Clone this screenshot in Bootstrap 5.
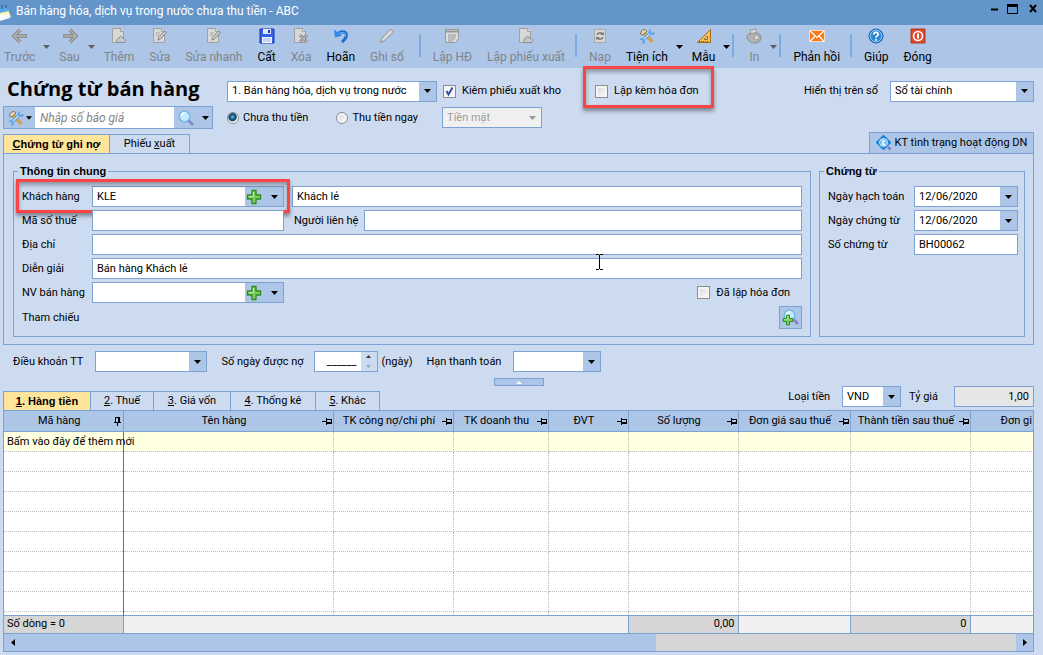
<!DOCTYPE html>
<html lang="vi">
<head>
<meta charset="utf-8">
<meta name="viewport" content="width=device-width, initial-scale=1">
<title>Bán hàng hóa, dịch vụ trong nước chưa thu tiền - ABC</title>
<link href="https://cdn.jsdelivr.net/npm/bootstrap@5.3.0/dist/css/bootstrap.min.css" rel="stylesheet">
<style>
:root{--line:#7ba2d2;--bar:#adc6e7;--page:#cddbf0;--arrow:url("data:image/svg+xml,%3Csvg xmlns='http://www.w3.org/2000/svg' width='7' height='4'%3E%3Cpath d='M0 0h7L3.5 4z'/%3E%3C/svg%3E")}
body{background:var(--page);color:#000;font:11px/16px Roboto,"Liberation Sans",sans-serif}
label{white-space:nowrap}
.titlebar{background:#6495ca;color:#fff;height:25px;font-size:12px}
.titlebar button{border:0;background:none;padding:0;display:flex}
.toolbar{background:var(--bar);height:43px;font-size:12px;padding-left:4px}
.tool{border:0;background:none;color:#000;padding:3px 0 0;margin-right:15px;display:flex;flex-direction:column;align-items:center;height:43px;gap:4px;white-space:nowrap;line-height:18px}
.tool:disabled{color:#808489}
.tool svg,.ico{width:16px;height:16px;flex:none}
.drop{border:0;background:none;padding:0;width:7px;margin:0 9px 0 -7px;display:flex;align-items:center;color:#000;height:43px}
.drop:disabled{color:#5c6066}
.divider{width:2px;height:23px;background:#7fabe0;margin:9px 12px 0 -5px}
.drop + .divider{margin-left:-2px}
.screen{padding:0 9px 0 3px}
h1{font:bold 20px/26px "Open Sans",sans-serif;margin:0}
.field,.pick{height:21px;border:1px solid var(--line);background-color:#fff;color:#000;padding:0 4px;border-radius:0;min-width:0;font:inherit}
.field:focus,.pick:focus{outline:1px solid #4c80c0}
.pick{appearance:none;background-image:var(--arrow),linear-gradient(var(--bar),var(--bar));background-repeat:no-repeat;background-position:right 5px center,right top;background-size:7px 4px,17px 100%;padding-right:19px;text-overflow:ellipsis}
.pick:disabled{background-color:#f0f0f0;color:#9d9d9d;opacity:1;background-image:url("data:image/svg+xml,%3Csvg xmlns='http://www.w3.org/2000/svg' width='7' height='4'%3E%3Cpath fill='%23999' d='M0 0h7L3.5 4z'/%3E%3C/svg%3E"),none}
.combo{display:flex;height:21px;border:1px solid var(--line);background:var(--bar);min-width:0}
.combo input{border:0;flex:1;width:0;min-width:0;padding:0 4px;background:#fff;font:inherit}
.combo button{border:0;background:var(--bar);padding:0;width:17px;display:flex;align-items:center;justify-content:center}
.combo .wide{width:21px;padding-right:3px}
.tick,.dot{appearance:none;width:13px;height:13px;flex:none;margin:0;border:1px solid #8b8d91;background:linear-gradient(135deg,#cfd2d8,#fff);box-shadow:inset 0 0 0 2px #f4f4f4}
.tick:checked{background:#f4f6fa url("data:image/svg+xml,%3Csvg xmlns='http://www.w3.org/2000/svg' viewBox='0 0 11 11'%3E%3Cpath d='M2.5 5l2 3.5L8.500 1.500' fill='none' stroke='%233b4ea0' stroke-width='2'/%3E%3C/svg%3E") center/11px;box-shadow:none}
.dot{border-radius:50%;width:12px;height:12px}
.dot:checked{background:radial-gradient(circle at 45% 40%,#5cc6ee 0,#14496d 35%,#14496d 45%,#f4f4f4 60%);box-shadow:none}
.opt{display:flex;align-items:center;gap:6px}
.opt-radio{gap:4px}
.opt-stock{margin-left:6px}
.head-grid{display:grid;grid-template-columns:224px 1fr;align-items:center}
.invoice{position:relative;margin-left:24px;padding-left:10px}
.mark-box{position:absolute;border:3px solid #f94545;box-shadow:0 3px 4px #0006,inset 0 3px 4px #0005;pointer-events:none}
.mark-customer{inset:-7px auto -6px -6px;width:274px}
.mark-invoice{inset:-17px -15px -9px -2px}
.search{width:210px;height:23px;background:var(--bar);border:1px solid var(--line)}
.search input{border:0;width:139px;padding:0 5px;height:21px;font:inherit;font-size:12px}
.search input::placeholder{color:#858585;font-style:italic;opacity:1}
.search button{border:0;background:none;padding:0;display:flex;align-items:center}
.search .mode{padding:0 3px 0 4px;gap:2px}
.tab-line{margin-top:3px}
.tabs{display:flex;padding:0;margin:0;list-style:none}
.tabs button{border:1px solid var(--line);border-left-width:0;border-bottom:0;background:var(--page);height:19px;padding:0;line-height:18px;text-align:center;color:#000}
.tabs li:first-child button{border-left-width:1px}
.tabs .active{background:#ffe49b;font:bold 11px/18px "Liberation Sans",sans-serif}
.main-tabs button{width:80px}.main-tabs .active{width:107px}
.detail-tabs button{width:63px}.detail-tabs .active{width:88px}.detail-tabs .t3{width:77px}.detail-tabs .t4{width:85px}.detail-tabs .t5{width:64px}
.status-btn{border:1px solid var(--line);border-bottom:0;background:var(--bar);height:21px;width:165px;padding:0;gap:3px;white-space:nowrap}
.panel{border:1px solid var(--line);padding:9px 8px 7px 9px;display:grid;grid-template-columns:1fr 206px;gap:8px}
fieldset{border:1px solid var(--line);padding:7px 8px 7px 8px}
legend{float:none;width:auto;margin:0 0 0 -4px;padding:0 2px;font:bold 11px/16px "Liberation Sans",sans-serif}
.stack-rows{display:grid;gap:3px}
.line-row{display:grid;grid-template-columns:70px minmax(0,1fr);align-items:center;min-height:21px;position:relative}
.right-box .line-row{grid-template-columns:86px minmax(0,1fr)}
.right-box{padding-right:6px}
.w-code{width:192px}
.contact-label{margin:0 6px 0 10px}
.ibeam{position:absolute;left:71%;top:-5px;margin-left:19px}
.plus-btn{width:23px;height:23px;border:1px solid var(--line);background:var(--bar);padding:0;display:grid;place-items:center}
.terms{margin-top:6px;padding-left:10px}
.terms label{margin-right:12px}
.terms .next{margin-left:14px}
.terms .days-label{margin-right:10px}
.spin button{height:50%;background:var(--page);border:0;width:16px}
.spin .steps{width:16px}
.splitter{width:50px;height:8px;border:1px solid var(--line);background:var(--bar);padding:0;display:flex;justify-content:center;align-items:center;margin:6px auto 0}
.currency{gap:8px;margin-bottom:3px}
.w-doc{width:210px}.w-cash{width:100px}.w-book{width:144px}.w-term{width:112px}.w-due{width:88px}.w-cur{width:59px}.w-rate{width:80px}.w-days{width:64px}
.field.w-rate{background:#e6e6e6}
.gridbox{border:1px solid var(--line);overflow:hidden;background:#fff}
.gridbox table{table-layout:fixed;width:1082px;min-width:105%;border-collapse:collapse;margin:0}
.gridbox col{width:120px}
.gridbox .c1{width:119px}.gridbox .c2{width:210px}.gridbox .c4{width:95px}.gridbox .c5{width:80px}.gridbox .c6{width:110px}.gridbox .c7{width:112px}.gridbox .c9{width:auto}
.gridbox th,.gridbox td{height:20px;padding:0 3px;line-height:19px;white-space:nowrap;border:1px dotted #bdbdbd;border-width:0 1px 1px 0}
.gridbox th{background:var(--bar);font-weight:400;border:1px solid var(--line);border-width:0 1px 1px 0;padding-right:1px}
.gridbox .last-head{text-align:left;padding-left:30px}
.gridbox tbody td:first-child{border-right:1px solid #707070}
.gridbox .entry td{background:#ffffe1}
.gridbox .short td{height:4px;line-height:3px;border-bottom:0}
.gridbox tfoot td{background:#f0f0f0;border:1px solid var(--line);border-width:1px 1px 1px 0;height:18px;line-height:16px}
.gridbox tfoot .sum{background:#d6d6d6}
.cap{display:flex;align-items:center}.cap span{flex:1;text-align:center}.cap svg{width:10px;height:10px;flex:none}
.hscroll{height:17px;background:var(--bar)}
.hscroll button{border:0;background:none;width:17px;padding:0;display:flex;align-items:center;justify-content:center}
.hscroll .rail{background:#d6d6d6;width:35%}
</style>
</head>
<body>
<svg width="0" height="0" class="position-absolute" aria-hidden="true">
<defs>
<symbol id="caret" viewBox="0 0 7 4"><path d="M0 0h7L3.500 4z" fill="currentColor"/></symbol>
<symbol id="left" viewBox="0 0 16 16"><path d="M8 2L2 8l6 6M2.500 8H15" fill="none" stroke="#858585" stroke-width="3.600"/><path d="M8 2L2 8l6 6M2.500 8H14.500" fill="none" stroke="#b2b2b2" stroke-width="1.600"/></symbol>
<symbol id="right" viewBox="0 0 16 16"><path d="M8 2l6 6-6 6M13.500 8H1" fill="none" stroke="#858585" stroke-width="3.600"/><path d="M8 2l6 6-6 6M13.500 8H1.500" fill="none" stroke="#b2b2b2" stroke-width="1.600"/></symbol>
<symbol id="page" viewBox="0 0 16 16"><path d="M1.500.500h8l3 3v11h-11z" fill="#d8d8d8" stroke="#a0a0a0"/><path d="M9.500.500v3h3" fill="#eee" stroke="#a0a0a0"/></symbol>
<symbol id="new" viewBox="0 0 16 16"><use href="#page"/><path d="M6 14.500c-1.500-3 1-5 2-3.500 0-3.500 3-3.500 3.500-.500 3-.500 4 2 2.500 4z" fill="#c8c8c8" stroke="#8f8f8f"/></symbol>
<symbol id="edit" viewBox="0 0 16 16"><use href="#page"/><path d="M4 5h4M4 7h3" stroke="#aaa"/><path d="M6 12l.5-2.500 6-6.500 2 1.500-6.500 7z" fill="#ccc" stroke="#858585"/></symbol>
<symbol id="save" viewBox="0 0 16 16"><path d="M1 1h14v14H1z" fill="#3463e8" stroke="#1733b8"/><path d="M4 1h8v5H4z" fill="#dce8ff"/><path d="M9 2h2v3H9z" fill="#1a35b8"/><path d="M3 9h10v6H3z" fill="#f4f7ff"/><path d="M4 11h8M4 13h8" stroke="#9bb2ec"/></symbol>
<symbol id="del" viewBox="0 0 16 16"><use href="#page"/><path d="M7 7l7 7M14 7l-7 7" stroke="#8a8a8a" stroke-width="3"/><path d="M7 7l7 7M14 7l-7 7" stroke="#ccc"/></symbol>
<symbol id="undo" viewBox="0 0 16 16"><path d="M4.500 6C9 2 15 4 13 9c-.7 2-2.200 3.500-4 5" fill="none" stroke="#1e6fd0" stroke-width="3.200"/><path d="M1 1.500l1 8 7-2z" fill="#2b87e6"/><path d="M4.500 6C9 3 14 4.500 12.500 8.500" fill="none" stroke="#69b6f7"/></symbol>
<symbol id="pencil" viewBox="0 0 16 16"><path d="M1.500 14.500l1-4 9-9.500 3 3-9.500 9z" fill="#cfcfcf" stroke="#959595"/><path d="M4 11.500l8.500-8.500" stroke="#eee"/></symbol>
<symbol id="bill" viewBox="0 0 16 16"><path d="M1.500 1.500h13v9l-3 4h-10z" fill="#dedede" stroke="#9a9a9a"/><path d="M2 3.500h12" stroke="#999" stroke-width="2"/><path d="M4 7h8M4 9h8M4 11h7M4 13h5" stroke="#999"/></symbol>
<symbol id="reload" viewBox="0 0 16 16"><path d="M2.500 1.500h11v13h-11z" fill="#d8d8d8" stroke="#a8a8a8"/><path d="M5 7c1-3 5-3 5.500-.500M11 9c-1 3-5 3-5.500.500" fill="none" stroke="#777" stroke-width="1.500"/><path d="M8 7h4V4zM8 9H4v3z" fill="#777"/></symbol>
<symbol id="tools" viewBox="0 0 16 16"><path d="M5 5l8.500 9" stroke="#c98a2c" stroke-width="3"/><path d="M5 5l8.500 9" stroke="#ffcf70"/><path d="M1.500 6c0-3 2-4.500 5-4.500L8 3 4 7z" fill="#ddd6c8" stroke="#86724f"/><path d="M3.500 12.500L12 4.500" stroke="#3d93dc" stroke-width="2.800"/><path d="M3.500 12.500L12 4.500" stroke="#d0ebff" stroke-width="1.200"/><path d="M11 1.500l-.500 3.500 3 1 2-1.500M1 11l3 .500 1 2.500-1.500 1.500" fill="none" stroke="#55a5e6" stroke-width="1.700"/></symbol>
<symbol id="ruler" viewBox="0 0 16 16"><path d="M1.500 14.500L14.500 1.500v13z" fill="#f9c25c" stroke="#a8691a"/><path d="M8 11.500l3.500-3.500v3.500z" fill="#c6d9f2" stroke="#a8691a"/><path d="M3.500 13v1M5.500 13v1M7.500 13v1M9.500 13v1M11.500 13v1" stroke="#734a0d"/></symbol>
<symbol id="print" viewBox="0 0 16 16"><path d="M4 2l6-1 1 5-6 1z" fill="#d4d4d4" stroke="#999"/><path d="M1 9c0-4 5-3 8-4 4 0 6 2 6 5s-3 5-6 5-8-2-8-6z" fill="#b4b4b4" stroke="#8b8b8b"/><circle cx="10.500" cy="9.500" r="2.500" fill="#d8d8d8" stroke="#999"/></symbol>
<symbol id="mail" viewBox="0 0 16 16"><path d="M.5 2.500h15v11H.5z" fill="#f47a1c" stroke="#fbd9b8"/><path d="M1 3l7 6.500L15 3M1 13.500L6 8M15 13.500L10 8" fill="none" stroke="#fff" stroke-width="1.200"/></symbol>
<symbol id="help" viewBox="0 0 16 16"><circle cx="8" cy="8" r="7" fill="#2e87d6" stroke="#1a5faa"/><circle cx="8" cy="8" r="5.800" fill="none" stroke="#8fc9f5"/><path d="M5.800 6.500c0-3 4.600-2.800 4.400-.200C10.200 8 8 7.800 8 9.800M8 11v1.800" fill="none" stroke="#fff" stroke-width="1.700"/></symbol>
<symbol id="power" viewBox="0 0 16 16"><path d="M1 1h14v14H1z" fill="#dd4a30" stroke="#b93420"/><circle cx="8" cy="8" r="4.500" fill="none" stroke="#fff" stroke-width="1.600"/><path d="M8 5.500v5" stroke="#fff" stroke-width="2"/></symbol>
<symbol id="glass" viewBox="0 0 16 16"><path d="M11 11l3 3" stroke="#8d83d0" stroke-width="3" stroke-linecap="round"/><circle cx="6.500" cy="6.500" r="5.300" fill="#c3e8ff" stroke="#6cb4ea" stroke-width="1.300"/><path d="M3.500 6c0-2 1.500-3 3-3" fill="none" stroke="#fff" stroke-width="1.500"/></symbol>
<symbol id="plus" viewBox="0 0 16 16"><path d="M6 1.500h4V6h4.500v4H10v4.500H6V10H1.500V6H6z" fill="#7bcf5a" stroke="#2c8b1f" stroke-width="1.300"/><path d="M7.500 3v4.500H3" fill="none" stroke="#c0efaa"/></symbol>
<symbol id="gem" viewBox="0 0 16 16"><path d="M7.500 1L14 7.500 7.500 14 1 7.500z" fill="#2f9ce8" stroke="#1b84d2" stroke-width="2" stroke-linejoin="round"/><circle cx="7.500" cy="7.500" r="4" fill="#6fc0fa" stroke="#c9eaff"/><path d="M9 6H7v3.500h2" fill="none" stroke="#fff" stroke-width="1.500"/><path d="M12 12l2.500 2.500" stroke="#8177cc" stroke-width="2.500"/></symbol>
<symbol id="pin" viewBox="0 0 10 10"><path d="M0 5h4v1H0zM4 2h1v7H4zM5 3h5v1H5zM9 4h1v3H9zM5 6h5v2H5z" fill="#000"/></symbol>
<symbol id="pindown" viewBox="0 0 10 10"><path d="M5 7h1v3H5zM2 6h7v1H2zM3 1h1v5H3zM4 1h3v1H4zM6 1h2v5H6z" fill="#000"/></symbol>
</defs>
</svg>

<header>
  <div class="titlebar d-flex align-items-center">
    <svg width="12" height="18" viewBox="0 0 12 18" class="me-1"><path d="M0 7l7-4 4 10-11 3z" fill="#fff6ae"/><path d="M0 4l8-1 1 4-9 2z" fill="#55a6ea"/><path d="M0 11l8-1 2 4-10 3z" fill="#f7fbff"/><path d="M2 1v4M6 1v3" stroke="#26578f"/></svg>
    <span class="flex-grow-1 text-truncate pb-1">Bán hàng hóa, dịch vụ trong nước chưa thu tiền - ABC</span>
    <div class="d-flex align-items-center pb-2 pe-1">
      <button type="button" class="me-2" aria-label="Thu nhỏ"><svg width="9" height="10"><path d="M1 5.500h7" stroke="#000" stroke-width="2"/></svg></button>
      <button type="button" class="me-2" aria-label="Phóng to"><svg width="13" height="10"><path d="M.5 1v8.500h10V1" fill="none" stroke="#000"/><path d="M0 1.500h11" stroke="#000" stroke-width="3"/></svg></button>
      <button type="button" aria-label="Đóng cửa sổ"><svg width="11" height="9"><path d="M2 1l6 7M8 1L2 8" stroke="#000" stroke-width="2"/></svg></button>
    </div>
  </div>
  <nav class="toolbar d-flex" aria-label="Thanh công cụ">
    <button class="tool" disabled><svg><use href="#left"/></svg>Trước</button>
    <button class="drop" disabled aria-label="Chọn trước"><svg width="7" height="4"><use href="#caret"/></svg></button>
    <button class="tool" disabled><svg><use href="#right"/></svg>Sau</button>
    <button class="drop" disabled aria-label="Chọn sau"><svg width="7" height="4"><use href="#caret"/></svg></button>
    <button class="tool" disabled><svg><use href="#new"/></svg>Thêm</button>
    <button class="tool" disabled><svg><use href="#edit"/></svg>Sửa</button>
    <button class="tool" disabled><svg><use href="#edit"/></svg>Sửa nhanh</button>
    <button class="tool"><svg><use href="#save"/></svg>Cất</button>
    <button class="tool" disabled><svg><use href="#del"/></svg>Xóa</button>
    <button class="tool"><svg><use href="#undo"/></svg>Hoãn</button>
    <button class="tool" disabled><svg><use href="#pencil"/></svg>Ghi sổ</button>
    <span class="divider ms-0"></span>
    <button class="tool" disabled><svg><use href="#bill"/></svg>Lập HĐ</button>
    <button class="tool" disabled><svg><use href="#new"/></svg>Lập phiếu xuất</button>
    <span class="divider"></span>
    <button class="tool" disabled><svg><use href="#reload"/></svg>Nạp</button>
    <button class="tool"><svg><use href="#tools"/></svg>Tiện ích</button>
    <button class="drop" aria-label="Chọn tiện ích"><svg width="7" height="4"><use href="#caret"/></svg></button>
    <button class="tool"><svg><use href="#ruler"/></svg>Mẫu</button>
    <button class="drop me-1" aria-label="Chọn mẫu"><svg width="7" height="4"><use href="#caret"/></svg></button>
    <span class="divider"></span>
    <button class="tool" disabled><svg><use href="#print"/></svg>In</button>
    <button class="drop me-1" disabled aria-label="Chọn máy in"><svg width="7" height="4"><use href="#caret"/></svg></button>
    <span class="divider"></span>
    <button class="tool"><svg><use href="#mail"/></svg>Phản hồi</button>
    <span class="divider"></span>
    <button class="tool"><svg><use href="#help"/></svg>Giúp</button>
    <button class="tool"><svg><use href="#power"/></svg>Đóng</button>
  </nav>
</header>

<main class="screen">
  <section class="head-grid pt-2">
    <h1 class="ps-1">Chứng từ bán hàng</h1>
    <div class="d-flex align-items-center pt-1">
      <select class="pick w-doc" aria-label="Loại chứng từ"><option>1. Bán hàng hóa, dịch vụ trong nước</option></select>
      <label class="opt opt-stock"><input type="checkbox" class="tick" checked>Kiêm phiếu xuất kho</label>
      <div class="invoice">
        <label class="opt"><input type="checkbox" class="tick">Lập kèm hóa đơn</label>
        <span class="mark-box mark-invoice"></span>
      </div>
      <label for="book" class="ms-auto me-2 pe-1">Hiển thị trên sổ</label>
      <select id="book" class="pick w-book"><option>Sổ tài chính</option></select>
    </div>
  </section>
  <section class="head-grid pt-1">
    <div class="search d-flex">
      <button type="button" aria-label="Tiện ích tìm kiếm" class="mode"><svg class="ico"><use href="#tools"/></svg><svg width="6" height="4"><use href="#caret"/></svg></button>
      <input type="text" placeholder="Nhập số báo giá" aria-label="Nhập số báo giá">
      <button type="button" aria-label="Tìm" class="ps-1"><svg class="ico"><use href="#glass"/></svg></button>
      <button type="button" aria-label="Chọn tìm" class="ps-2"><svg width="7" height="4"><use href="#caret"/></svg></button>
    </div>
    <div class="d-flex align-items-center">
      <label class="opt opt-radio"><input type="radio" name="pay" class="dot" checked>Chưa thu tiền</label>
      <label class="opt opt-radio ms-4 ps-1"><input type="radio" name="pay" class="dot">Thu tiền ngay</label>
      <select class="pick w-cash ms-4" disabled aria-label="Hình thức"><option>Tiền mặt</option></select>
    </div>
  </section>

  <div class="tab-line d-flex align-items-end justify-content-between">
    <ul class="tabs main-tabs">
      <li><button type="button" class="active"><u>C</u>hứng từ ghi nợ</button></li>
      <li><button type="button">Phiếu <u>x</u>uất</button></li>
    </ul>
    <button type="button" class="status-btn d-flex align-items-center justify-content-center"><svg class="ico"><use href="#gem"/></svg>KT tình trạng hoạt động DN</button>
  </div>
  <section class="panel">
    <fieldset>
      <legend>Thông tin chung</legend>
      <div class="stack-rows">
        <div class="line-row">
          <label for="cust">Khách hàng</label>
          <div class="d-flex gap-2">
            <div class="combo w-code"><input id="cust" type="text" value="KLE"><button type="button" class="wide" aria-label="Thêm khách hàng"><svg class="ico"><use href="#plus"/></svg></button><button type="button" aria-label="Chọn khách hàng"><svg width="7" height="4"><use href="#caret"/></svg></button></div>
            <input class="field flex-grow-1" type="text" value="Khách lẻ" aria-label="Tên khách hàng">
          </div>
          <span class="mark-box mark-customer"></span>
        </div>
        <div class="line-row">
          <label for="tax">Mã số thuế</label>
          <div class="d-flex align-items-center"><input id="tax" class="field w-code" type="text"><label for="contact" class="contact-label">Người liên hệ</label><input id="contact" class="field flex-grow-1" type="text"></div>
        </div>
        <div class="line-row"><label for="addr">Địa chỉ</label><input id="addr" class="field" type="text"></div>
        <div class="line-row"><label for="desc">Diễn giải</label><input id="desc" class="field" type="text" value="Bán hàng Khách lẻ">
          <svg class="ibeam" width="9" height="18"><path d="M1 1.500h3M5 1.500h3M4.500 2v14M1 16.500h3M5 16.500h3" stroke="#000"/></svg>
        </div>
        <div class="line-row">
          <label for="staff">NV bán hàng</label>
          <div class="d-flex align-items-center justify-content-between">
            <div class="combo w-code"><input id="staff" type="text"><button type="button" class="wide" aria-label="Thêm nhân viên"><svg class="ico"><use href="#plus"/></svg></button><button type="button" aria-label="Chọn nhân viên"><svg width="7" height="4"><use href="#caret"/></svg></button></div>
            <label class="opt me-2 pe-1"><input type="checkbox" class="tick">Đã lập hóa đơn</label>
          </div>
        </div>
        <div class="line-row">
          <span>Tham chiếu</span>
          <button type="button" class="plus-btn ms-auto" aria-label="Thêm tham chiếu"><svg width="17" height="17" viewBox="0 0 17 17"><use href="#glass" width="16" height="16" x="1"/><use href="#plus" width="12" height="12" y="5"/></svg></button>
        </div>
      </div>
    </fieldset>
    <fieldset class="right-box">
      <legend>Chứng từ</legend>
      <div class="stack-rows">
        <div class="line-row"><label for="d1">Ngày hạch toán</label><div class="combo"><input id="d1" type="text" value="12/06/2020"><button type="button" aria-label="Chọn ngày hạch toán"><svg width="7" height="4"><use href="#caret"/></svg></button></div></div>
        <div class="line-row"><label for="d2">Ngày chứng từ</label><div class="combo"><input id="d2" type="text" value="12/06/2020"><button type="button" aria-label="Chọn ngày chứng từ"><svg width="7" height="4"><use href="#caret"/></svg></button></div></div>
        <div class="line-row"><label for="no">Số chứng từ</label><input id="no" class="field" type="text" value="BH00062"></div>
      </div>
    </fieldset>
  </section>

  <section class="terms d-flex align-items-center">
    <label for="term">Điều khoản TT</label>
    <select id="term" class="pick w-term"><option></option></select>
    <label for="days" class="next days-label">Số ngày được nợ</label>
    <div class="combo spin w-days"><input id="days" type="text" value="______" class="text-end"><div class="steps d-flex flex-column"><button type="button" aria-label="Tăng"><svg width="5" height="3" viewBox="0 0 5 3"><path d="M0 3h5L2.500 0z" fill="#334"/></svg></button><button type="button" aria-label="Giảm"><svg width="5" height="3" viewBox="0 0 5 3"><path d="M0 0h5L2.500 3z" fill="#9ab"/></svg></button></div></div>
    <span class="ms-1">(ngày)</span>
    <label for="due" class="next">Hạn thanh toán</label>
    <select id="due" class="pick w-due"><option></option></select>
  </section>
  <button type="button" class="splitter" aria-label="Thu gọn"><svg width="6" height="3"><path d="M0 3h6L3 0z" fill="#fff"/></svg></button>

  <div class="d-flex align-items-end justify-content-between">
    <ul class="tabs detail-tabs">
      <li><button type="button" class="active"><u>1</u>. Hàng tiền</button></li>
      <li><button type="button"><u>2</u>. Thuế</button></li>
      <li><button type="button" class="t3"><u>3</u>. Giá vốn</button></li>
      <li><button type="button" class="t4"><u>4</u>. Thống kê</button></li>
      <li><button type="button" class="t5"><u>5</u>. Khác</button></li>
    </ul>
    <div class="currency d-flex align-items-center">
      <label for="cur" class="me-1">Loại tiền</label>
      <select id="cur" class="pick w-cur"><option>VND</option></select>
      <label for="rate">Tỷ giá</label>
      <input id="rate" type="text" class="field w-rate text-end ms-2" value="1,00">
    </div>
  </div>
  <section class="gridbox">
    <table>
      <colgroup><col class="c1"><col class="c2"><col><col class="c4"><col class="c5"><col class="c6"><col class="c7"><col><col class="c9"></colgroup>
      <thead><tr>
        <th><div class="cap"><span>Mã hàng</span><svg><use href="#pindown"/></svg></div></th>
        <th><div class="cap"><span>Tên hàng</span><svg><use href="#pin"/></svg></div></th>
        <th><div class="cap"><span>TK công nợ/chi phí</span><svg><use href="#pin"/></svg></div></th>
        <th><div class="cap"><span>TK doanh thu</span><svg><use href="#pin"/></svg></div></th>
        <th><div class="cap"><span>ĐVT</span><svg><use href="#pin"/></svg></div></th>
        <th><div class="cap"><span>Số lượng</span><svg><use href="#pin"/></svg></div></th>
        <th><div class="cap"><span>Đơn giá sau thuế</span><svg><use href="#pin"/></svg></div></th>
        <th><div class="cap"><span>Thành tiền sau thuế</span><svg><use href="#pin"/></svg></div></th>
        <th class="last-head">Đơn gi</th>
      </tr></thead>
      <tbody>
        <tr class="entry"><td>Bấm vào đây để thêm mới</td><td></td><td></td><td></td><td></td><td></td><td></td><td></td><td></td></tr>
        <tr><td></td><td></td><td></td><td></td><td></td><td></td><td></td><td></td><td></td></tr>
        <tr><td></td><td></td><td></td><td></td><td></td><td></td><td></td><td></td><td></td></tr>
        <tr><td></td><td></td><td></td><td></td><td></td><td></td><td></td><td></td><td></td></tr>
        <tr><td></td><td></td><td></td><td></td><td></td><td></td><td></td><td></td><td></td></tr>
        <tr><td></td><td></td><td></td><td></td><td></td><td></td><td></td><td></td><td></td></tr>
        <tr><td></td><td></td><td></td><td></td><td></td><td></td><td></td><td></td><td></td></tr>
        <tr><td></td><td></td><td></td><td></td><td></td><td></td><td></td><td></td><td></td></tr>
        <tr><td></td><td></td><td></td><td></td><td></td><td></td><td></td><td></td><td></td></tr>
        <tr class="short"><td></td><td></td><td></td><td></td><td></td><td></td><td></td><td></td><td></td></tr>
      </tbody>
      <tfoot><tr>
        <td class="sum">Số dòng = 0</td><td colspan="4"></td><td class="sum text-end">0,00</td><td></td><td class="sum text-end">0</td><td></td>
      </tr></tfoot>
    </table>
    <div class="hscroll d-flex">
      <button type="button" aria-label="Cuộn trái"><svg width="4" height="7"><path d="M4 0v7L0 3.500z"/></svg></button>
      <div class="flex-grow-1"></div><div class="rail"></div>
      <button type="button" aria-label="Cuộn phải"><svg width="4" height="7"><path d="M0 0v7l4-3.500z"/></svg></button>
    </div>
  </section>
</main>
<script src="https://cdn.jsdelivr.net/npm/bootstrap@5.3.0/dist/js/bootstrap.bundle.min.js"></script>
</body>
</html>
